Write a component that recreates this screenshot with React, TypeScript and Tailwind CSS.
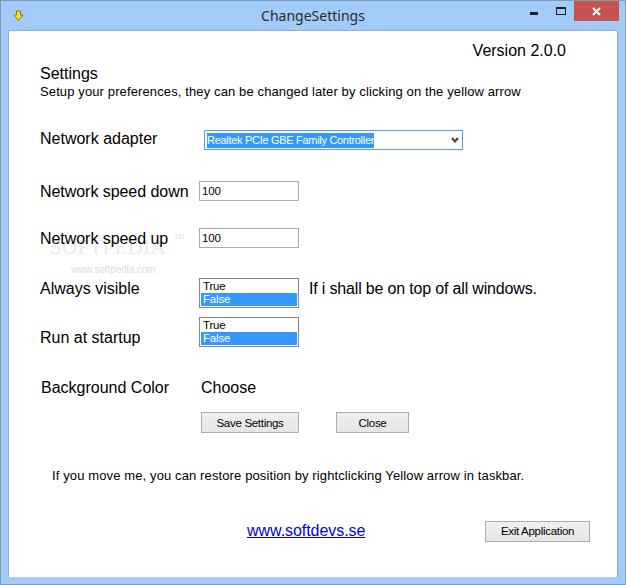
import React from 'react';

const FONT = "font-['Liberation_Sans',Arial,sans-serif]";

function TextBox() {
  return (
    <div className="w-[100px] h-[20px] border border-[#ababab] bg-white pl-[2px] text-[11.5px] leading-[18px] tracking-[-0.2px] text-black">
      100
    </div>
  );
}

function ListBox() {
  return (
    <div className="w-[100px] h-[30px] border border-[#828790] bg-white p-[1px] text-[11.5px] leading-[13px] tracking-[-0.2px] text-black">
      <div className="pl-[2px]">True</div>
      <div className="pl-[2px] bg-[#3399ff] text-white">False</div>
    </div>
  );
}

function Button({ label, className }: { label: string; className: string }) {
  return (
    <div
      className={`h-[21px] pt-[2px] border border-[#acacac] bg-gradient-to-b from-[#f0f0f0] to-[#e5e5e5] flex items-center justify-center text-[11.5px] tracking-[-0.3px] text-black ${className}`}
    >
      {label}
    </div>
  );
}

export default function App() {
  return (
    <div className={`${FONT} w-[626px] h-[585px] bg-[#a3cbf7] border border-[#7f9db9] flex flex-col overflow-hidden relative`}>
      {/* Title bar */}
      <div className="h-[29px] shrink-0 flex relative">
        <svg className="ml-[12px] mt-[9px]" width="11" height="12" viewBox="0 0 11 12">
          <path d="M3.5 1 H7.5 V5 H10 L5.5 10.5 L1 5 H3.5 Z" fill="#f5e60f" stroke="#8a7a10" strokeWidth="1" />
        </svg>
        <div className="absolute left-0 right-0 top-[5px] text-center font-['Noto_Sans',sans-serif] text-[14px] leading-[20px] text-[#2b2b2b]">
          ChangeSettings
        </div>
        <div className="ml-auto flex items-start">
          <svg className="mt-[11px]" width="8" height="3" viewBox="0 0 8 3">
            <rect width="8" height="3" fill="#1f1f1f" />
          </svg>
          <svg className="ml-[18px] mt-[6px]" width="10" height="8" viewBox="0 0 10 8">
            <rect x="0.5" y="0.5" width="9" height="7" fill="none" stroke="#1f1f1f" />
            <rect width="10" height="2" fill="#1f1f1f" />
          </svg>
          <div className="ml-[8px] mr-[6px] w-[45px] h-[20px] bg-[#c75050] flex items-center justify-center">
            <svg width="9" height="9" viewBox="0 0 9 9">
              <path d="M1 1 L8 8 M8 1 L1 8" stroke="white" strokeWidth="2" />
            </svg>
          </div>
        </div>
      </div>

      {/* Client area */}
      <div className="ml-[7px] mr-[7px] h-[547px] bg-white border-t border-x border-[#8fb0d6] relative text-black">
        {/* Softpedia watermark */}
        <div className="absolute left-[41px] top-[204px] font-['Liberation_Serif',serif] text-[21px] leading-[24px] tracking-[0.3px] text-[#ebebeb] pointer-events-none">
          SOFTPEDIA
        </div>
        <div className="absolute left-[165px] top-[201px] text-[7px] leading-[10px] text-[#e0e0e0] pointer-events-none">
          TM
        </div>
        <div className="absolute left-[62px] top-[232px] text-[10px] leading-[14px] tracking-[-0.1px] text-[#dcdcdc] pointer-events-none">
          www.softpedia.com
        </div>

        <div className="relative">
          <div className="h-[40px] pt-[10px] pr-[51px] text-right text-[16px] leading-[20px]">Version 2.0.0</div>

          <div className="pl-[31px] text-[16px] leading-[18px] -mt-[6px]">Settings</div>
          <div className="pl-[31px] text-[13px] leading-[18px] tracking-[0.12px]">Setup your preferences, they can be changed later by clicking on the yellow arrow</div>

          <div className="mt-[29px] h-[20px] pl-[31px] flex items-center">
            <div className="w-[164px] text-[16px] -mt-[3px]">Network adapter</div>
            <div className="w-[259px] h-[20px] border border-[#569de5] bg-white flex items-center pl-[2px] text-[11px] tracking-[-0.3px]">
              <span className="bg-[#3399ff] text-white leading-[15px]">Realtek PCIe GBE Family Controller</span>
              <svg className="ml-auto mr-[3px]" width="8" height="6" viewBox="0 0 8 6">
                <path d="M1 1 L4 4.5 L7 1" fill="none" stroke="#444" strokeWidth="2" />
              </svg>
            </div>
          </div>

          <div className="mt-[31px] h-[20px] pl-[31px] flex items-center">
            <div className="w-[159px] text-[16px] tracking-[-0.05px] mt-[2px]">Network speed down</div>
            <TextBox />
          </div>

          <div className="mt-[27px] h-[20px] pl-[31px] flex items-center">
            <div className="w-[159px] text-[16px] tracking-[-0.05px] mt-[2px]">Network speed up</div>
            <TextBox />
          </div>

          <div className="mt-[30px] h-[29px] pl-[31px] flex items-center">
            <div className="w-[159px] text-[16px] -mt-[7px]">Always visible</div>
            <ListBox />
            <div className="ml-[10px] text-[16px] tracking-[-0.17px] -mt-[7px]">If i shall be on top of all windows.</div>
          </div>

          <div className="mt-[10px] h-[30px] pl-[31px] flex items-center">
            <div className="w-[159px] text-[16px] mt-[12px]">Run at startup</div>
            <ListBox />
          </div>

          <div className="mt-[30px] h-[20px] pl-[32px] flex items-center text-[16px]">
            <div className="w-[160px] mt-[2px]">Background Color</div>
            <div className="mt-[2px]">Choose</div>
          </div>

          <div className="mt-[15px] pl-[192px] flex">
            <Button label="Save Settings" className="w-[98px]" />
            <Button label="Close" className="w-[73px] ml-[37px]" />
          </div>

          <div className="mt-[34px] pl-[43px] text-[13px] leading-[18px] tracking-[0.12px]">
            If you move me, you can restore position by rightclicking Yellow arrow in taskbar.
          </div>

          <div className="mt-[34px] pl-[238px] pr-[27px] flex items-center">
            <div className="text-[16px] text-[#0000ee] underline tracking-[-0.05px]">www.softdevs.se</div>
            <Button label="Exit Application" className="w-[105px] ml-auto" />
          </div>
        </div>
      </div>
    </div>
  );
}
